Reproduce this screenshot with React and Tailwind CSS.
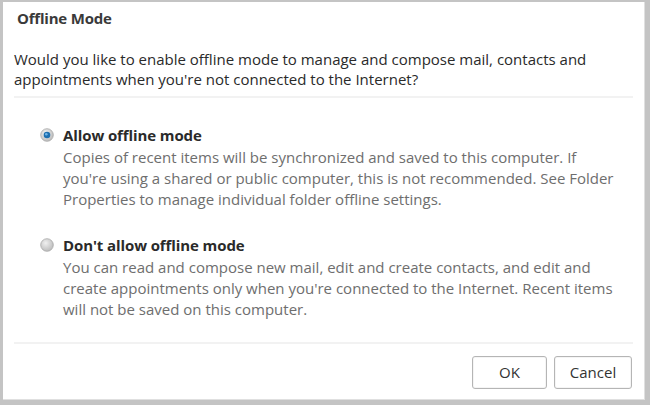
export default function App() {
  const options = [
    {
      label: 'Allow offline mode',
      checked: true,
      text: [
        'Copies of recent items will be synchronized and saved to this computer. If',
        "you're using a shared or public computer, this is not recommended. See Folder",
        'Properties to manage individual folder offline settings.',
      ],
    },
    {
      label: "Don't allow offline mode",
      checked: false,
      text: [
        'You can read and compose new mail, edit and create contacts, and edit and',
        "create appointments only when you're connected to the Internet. Recent items",
        'will not be saved on this computer.',
      ],
    },
  ]

  return (
    <div className="w-[650px] h-[405px] bg-[#c4c4c4] pl-[3px] pt-[2px] pr-[5px] pb-[5px] font-['Open_Sans',sans-serif]">
      <div className="w-full h-full bg-white border-r border-b border-[#e0e0e0] flex flex-col">
        <div className="pl-[14px] pt-[6px] text-[15px] font-bold text-[#3a3a3a] leading-[20px] tracking-[-0.2px]">Offline Mode</div>
        <div className="pl-[11px] pt-[21px] text-[15px] text-[#2a2a2a] leading-[20px]">
          <div>Would you like to enable offline mode to manage and compose mail, contacts and</div>
          <div>appointments when you're not connected to the Internet?</div>
        </div>
        <div className="mx-[11px] mt-[7px] h-[2px] bg-[#f2f2f2]" />
        <div className="pl-[37px] pt-[27px] flex flex-col gap-[25px]">
          {options.map((o) => (
            <div key={o.label}>
              <div className="flex items-center gap-[9px] h-[20px]">
                <Radio checked={o.checked} />
                <span className="text-[15px] font-bold text-[#2a2a2a] leading-[20px] tracking-[-0.1px]">{o.label}</span>
              </div>
              <div className="pl-[23px] pt-[2px] text-[15px] text-[#6e6e6e] leading-[21px]">
                {o.text.map((t) => (
                  <div key={t}>{t}</div>
                ))}
              </div>
            </div>
          ))}
        </div>
        <div className="mx-[11px] mt-[22px] h-[2px] bg-[#f2f2f2]" />
        <div className="flex justify-end gap-[7px] pr-[12px] pt-[12px]">
          <button className="w-[75px] h-[33px] rounded-[3px] border border-[#b5b5b5] bg-white text-[15px] text-[#333] shadow-[inset_0_0_0_1px_#f5f5f5]">OK</button>
          <button className="w-[78px] h-[33px] rounded-[3px] border border-[#b5b5b5] bg-white text-[15px] text-[#333] shadow-[inset_0_0_0_1px_#f5f5f5]">Cancel</button>
        </div>
      </div>
    </div>
  )
}

function Radio({ checked }) {
  return (
    <svg width="14" height="14" viewBox="0 0 14 14">
      <defs>
        <radialGradient id={checked ? 'rg1' : 'rg2'} cx="0.4" cy="0.35" r="0.7">
          <stop offset="0" stopColor={checked ? '#f4f4f4' : '#f0f0f0'} />
          <stop offset="1" stopColor={checked ? '#b8b8b8' : '#b9b9b9'} />
        </radialGradient>
      </defs>
      <circle cx="7" cy="7" r="6.3" fill={`url(#${checked ? 'rg1' : 'rg2'})`} stroke="#a8a8a8" strokeWidth="0.8" />
      {checked && (
        <>
          <circle cx="7" cy="7" r="3.3" fill="#1d6fb0" />
          <circle cx="6.3" cy="6.2" r="1.3" fill="#6fb4e8" />
        </>
      )}
    </svg>
  )
}
